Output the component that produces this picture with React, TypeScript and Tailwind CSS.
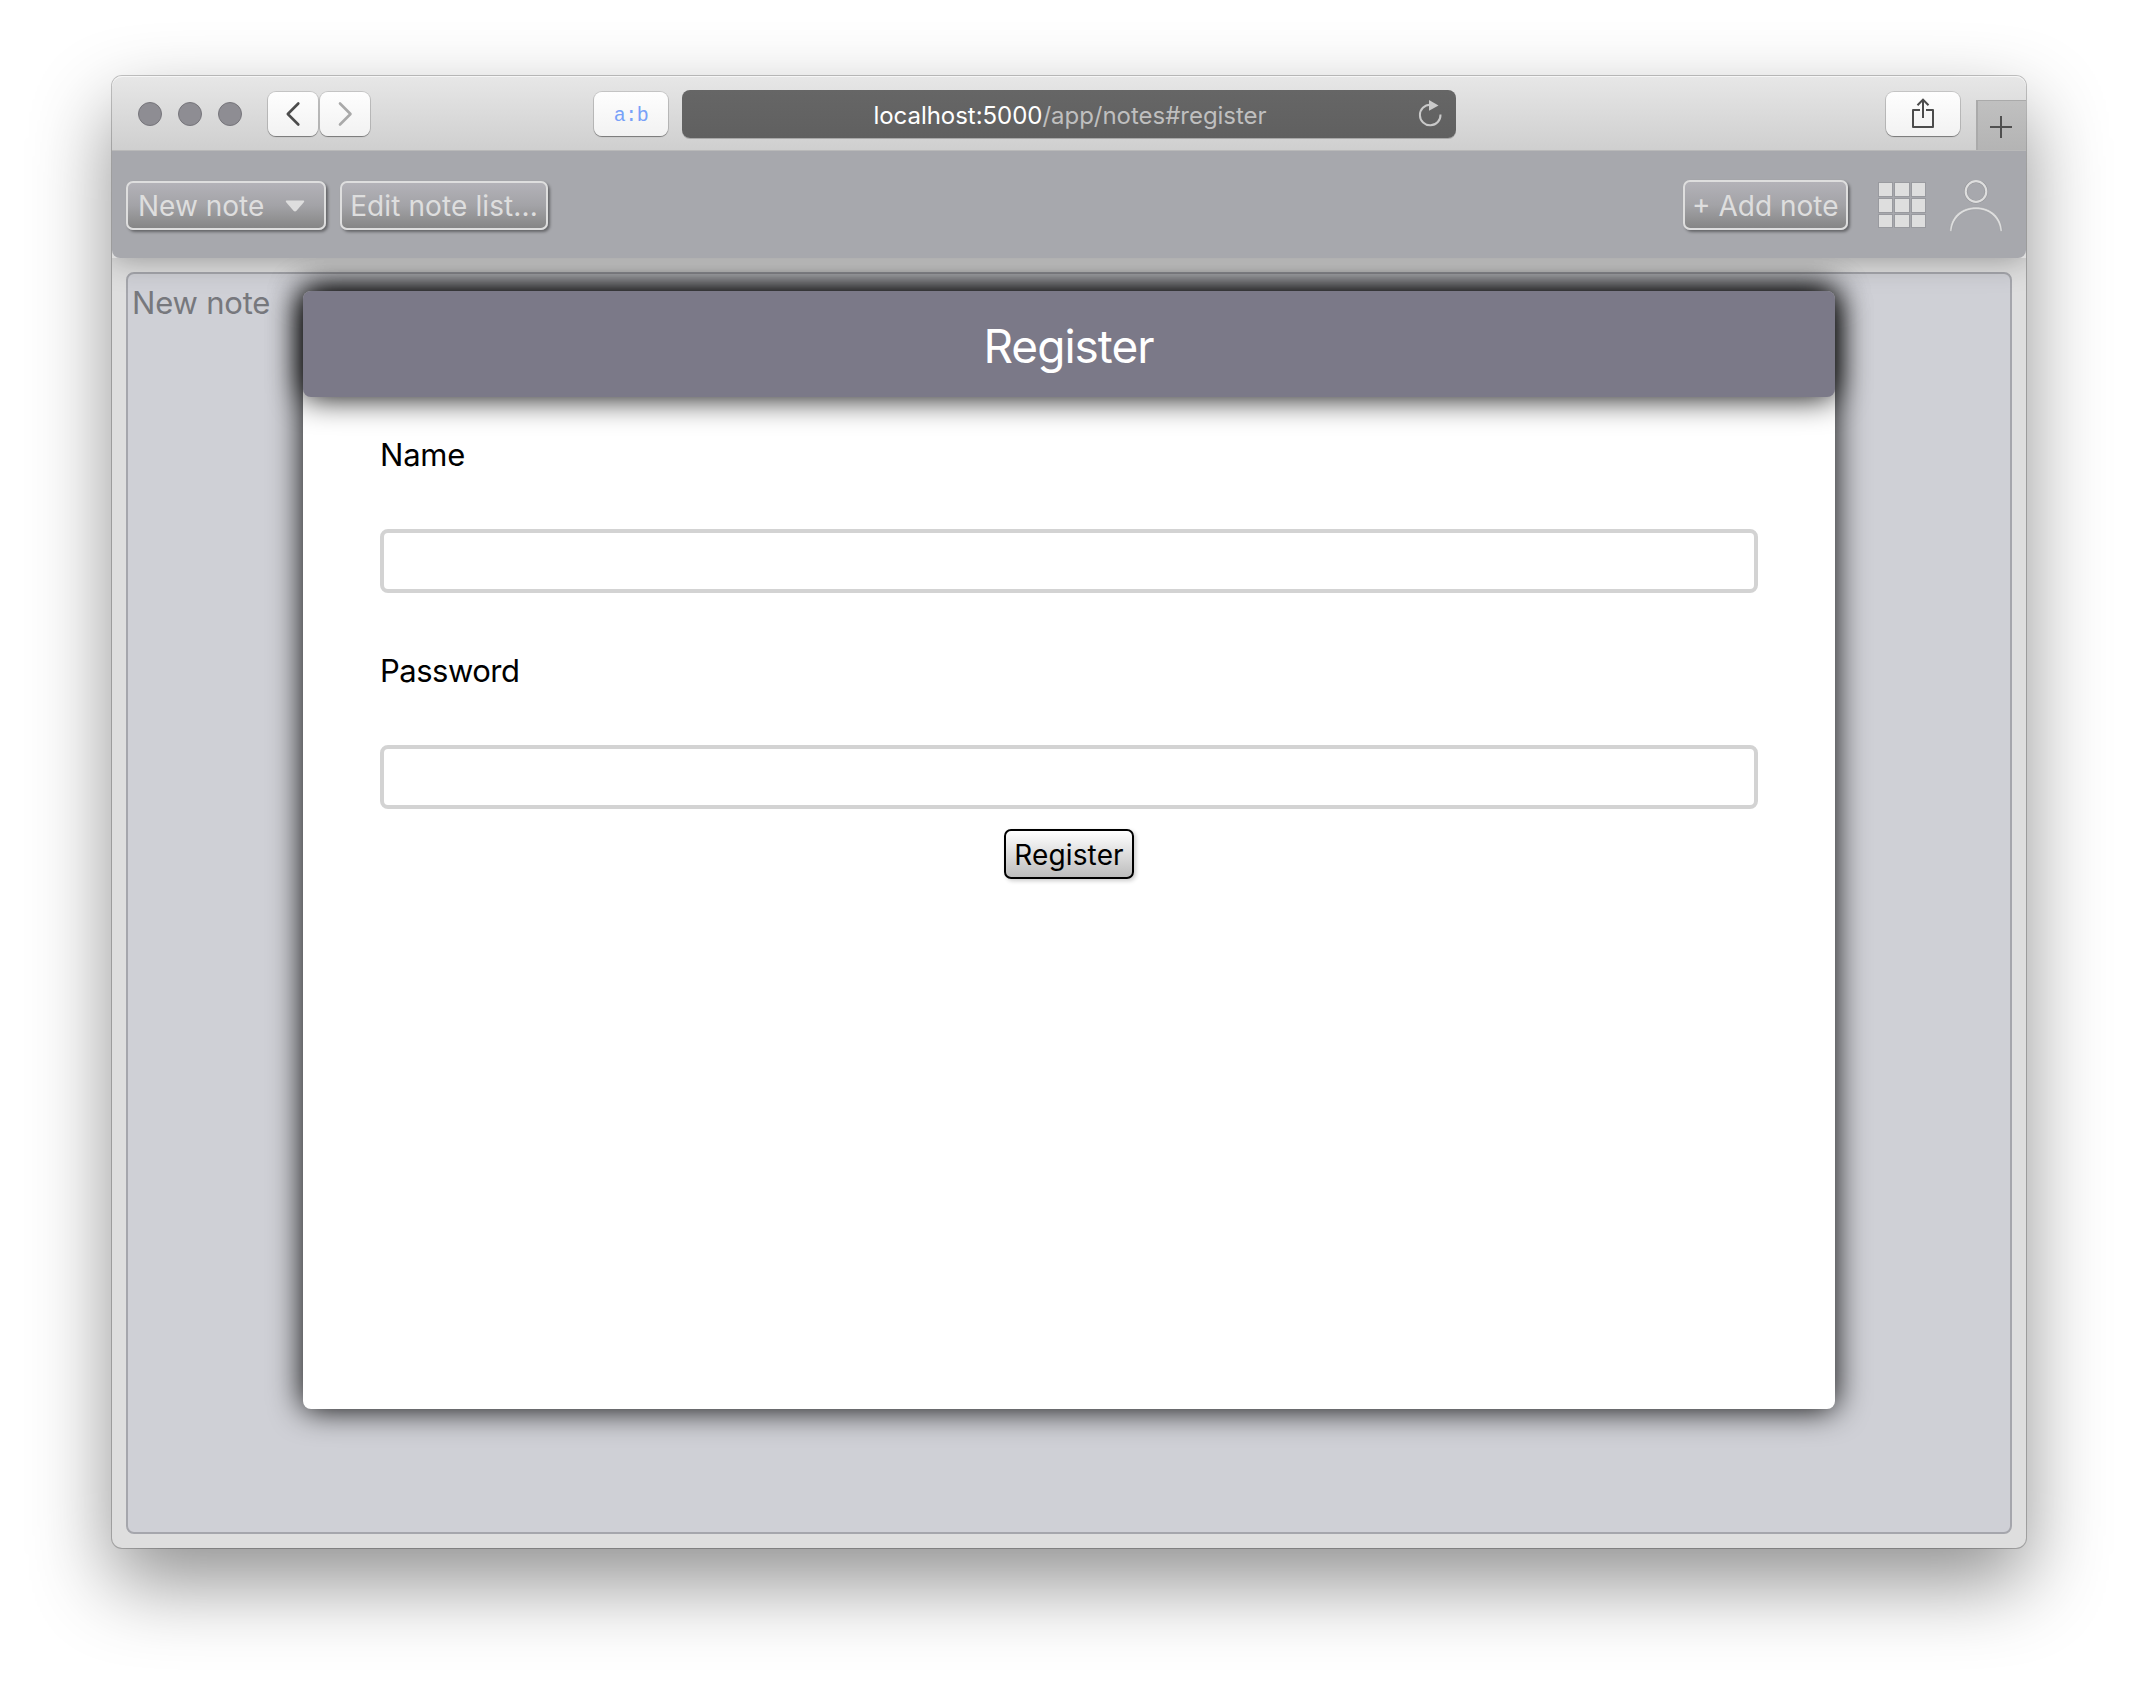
import type { ReactNode } from "react";

function ToolbarButton({ className, children }: { className: string; children: ReactNode }) {
  return (
    <button
      className={`flex h-11 items-center justify-center rounded-[8px] bg-gradient-to-b from-[#fefefe] to-[#f2f2f2] shadow-[0_0_0_1px_rgba(0,0,0,0.13),0_1px_1px_rgba(0,0,0,0.35)] ${className}`}
    >
      {children}
    </button>
  );
}

function AppButton({ className, children }: { className: string; children: ReactNode }) {
  return (
    <button
      className={`flex items-center rounded-[7px] border-2 border-[#dedede] bg-gradient-to-b from-[#b3b2b8] via-[#a3a3a7] to-[#868686] text-[28px] leading-none whitespace-nowrap text-[#dedede] shadow-[2px_2px_3px_rgba(0,0,0,0.4)] ${className}`}
    >
      {children}
    </button>
  );
}

function TitleBar() {
  return (
    <div className="flex h-[75px] shrink-0 items-start rounded-t-[10px] border-b border-[#b9b9b9] bg-gradient-to-b from-[#e7e7e7] to-[#cfcfcf] shadow-[inset_0_1px_0_#f6f6f6]">
      <div className="mt-[26px] ml-[26px] flex gap-4">
        {[0, 1, 2].map((i) => (
          <span key={i} className="size-6 rounded-full border border-[#76757b] bg-[#8e8d93]" />
        ))}
      </div>
      <div className="mt-4 ml-[26px] flex gap-[2px]">
        <ToolbarButton className="w-[50px]">
          <svg width="50" height="44" viewBox="0 0 50 44" fill="none" stroke="#4c4c4c" strokeWidth="2.6" strokeLinecap="round" strokeLinejoin="round">
            <path d="M30.3 11.5 19.8 22l10.5 10.5" />
          </svg>
        </ToolbarButton>
        <ToolbarButton className="w-[50px]">
          <svg width="50" height="44" viewBox="0 0 50 44" fill="none" stroke="#a9a9a9" strokeWidth="2.6" strokeLinecap="round" strokeLinejoin="round">
            <path d="M20 11.5 30.5 22 20 32.5" />
          </svg>
        </ToolbarButton>
      </div>
      <ToolbarButton className="mt-4 ml-56 w-[74px]">
        <span className="pt-1 font-['Liberation_Mono',monospace] text-[20px] leading-none tracking-[-0.5px] text-[#78a1f8]">a:b</span>
      </ToolbarButton>
      <div className="relative mt-[14px] ml-[14px] flex h-12 w-[774px] items-center justify-center rounded-[8px] bg-gradient-to-b from-[#666666] to-[#606060] pt-[3px] pl-[2px] text-[24px] leading-none tracking-[-0.03px] shadow-[0_1px_0_rgba(0,0,0,0.2)]">
        <span className="text-white">localhost:5000</span>
        <span className="text-[#bfbfbf]">/app/notes#register</span>
        <svg className="absolute top-0 right-0" width="52" height="48" viewBox="0 0 52 48" fill="none">
          <path d="M36.5 24.5A10.3 10.3 0 1 1 26.2 14.7" stroke="#c9c9c9" strokeWidth="2" />
          <path d="M25 10 34.5 15.4 25 20.8Z" fill="#c9c9c9" />
        </svg>
      </div>
      <ToolbarButton className="mt-4 ml-[430px] w-[74px]">
        <svg width="74" height="44" viewBox="0 0 74 44" fill="none" stroke="#4c4c4c" strokeWidth="2">
          <path d="M34 18H27V35H47V18H40" strokeLinejoin="round" />
          <path d="M37 26V7.8M31.5 13.3 37 7.6l5.5 5.7" />
        </svg>
      </ToolbarButton>
      <div className="mt-6 ml-auto flex h-[50px] w-[50px] items-center justify-center border-t border-l-2 border-[#aaaaaa] bg-gradient-to-b from-[#c0c0c0] to-[#b4b4b4] pt-[3px] pr-[2px]">
        <svg width="22" height="22" viewBox="0 0 22 22" stroke="#505050" strokeWidth="2">
          <path d="M11 0V22M0 11H22" />
        </svg>
      </div>
    </div>
  );
}

function AppHeader() {
  return (
    <header className="relative z-10 h-[107px] shrink-0 rounded-b-[8px] bg-[#a7a8ad]">
      <div className="flex items-start pt-[30px] pl-[14px]">
        <AppButton className="h-[49px] w-[200px] justify-between pr-[19px] pl-[10px]">
          New note
          <svg width="20" height="12" viewBox="0 0 20 12" fill="#dedede">
            <path d="M1.5 .5h17q1.3.2.5 1.5L11.5 10.8q-1.5 1.2-3 0L1 2Q.2.7 1.5.5Z" />
          </svg>
        </AppButton>
        <AppButton className="ml-[14px] h-[49px] w-52 justify-center tracking-[0.1px]">Edit note list...</AppButton>
        <AppButton className="-mt-px ml-auto h-[50px] w-[165px] justify-center pt-px">+ Add note</AppButton>
        <div className="mt-[2px] ml-[31px] grid grid-cols-3 gap-[3px]">
          {Array.from({ length: 9 }, (_, i) => (
            <span key={i} className="h-[12.8px] w-[13.4px] bg-[#dedede] shadow-[0_0_0_1px_rgba(0,0,0,0.08)]" />
          ))}
        </div>
        <svg className="-mt-px mr-[23px] ml-[24px]" width="54" height="54" viewBox="0 0 54 54" fill="none">
          <circle cx="27" cy="11.5" r="10.3" stroke="#929397" strokeWidth="3.2" />
          <circle cx="27" cy="11.5" r="10.3" stroke="#dedede" strokeWidth="2.2" />
          <path d="M.8 51.5C1 37 12 27 27 27S53 37 53.2 51.5H51.3C50 37.5 40 29.5 27 29.5S4 37.5 2.7 51.5Z" fill="#dedede" stroke="#999a9e" strokeWidth=".5" />
        </svg>
      </div>
    </header>
  );
}

function Field({ label, labelClass }: { label: string; labelClass: string }) {
  return (
    <label className="block">
      <span className={`block h-[94px] text-[31px] leading-[39px] ${labelClass}`}>{label}</span>
      <input className="block h-16 w-full rounded-[8px] border-4 border-[#d3d3d3] bg-white px-3 text-[28px] outline-none" />
    </label>
  );
}

function RegisterDialog() {
  return (
    <section className="h-[1118px] w-[1532px] rounded-[8px] bg-white text-black shadow-[0_0_32px_#000]">
      <h1 className="flex h-[106px] items-center justify-center rounded-[8px] bg-[#7b7988] pt-[3px] pr-px text-[46px] leading-none tracking-[-1px] text-white shadow-[0_0_32px_#000]">
        Register
      </h1>
      <form className="flex flex-col px-[77px] pt-[38px]">
        <Field label="Name" labelClass="tracking-[-0.2px]" />
        <div className="mt-[58px]">
          <Field label="Password" labelClass="tracking-[-0.5px]" />
        </div>
        <button
          type="button"
          className="mt-5 flex h-[50px] w-[130px] items-center justify-center self-center rounded-[7px] border-2 border-black bg-gradient-to-b from-white to-[#bdbdbd] pt-px text-[28px] leading-none tracking-[0.15px] shadow-[2px_2px_4px_rgba(0,0,0,0.2)]"
        >
          Register
        </button>
      </form>
    </section>
  );
}

export default function App() {
  return (
    <div className="h-[1696px] w-[2138px] overflow-hidden bg-white pt-[76px] pl-[112px] font-['Inter',sans-serif]">
      <div className="flex h-[1472px] w-[1914px] flex-col rounded-[10px] bg-[#dedede] shadow-[0_0_0_1px_rgba(0,0,0,0.22),0_34px_80px_rgba(0,0,0,0.44)]">
        <TitleBar />
        <AppHeader />
        <main className="relative flex flex-1 flex-col overflow-hidden rounded-b-[10px] p-[14px]">
          <div className="flex-1 rounded-[8px] border-2 border-[#a5a6ac] bg-[#cfd0d6] pt-[10px] pl-[4px] text-[31px] leading-[38px] tracking-[-0.2px] text-[#77787d]">
            New note
          </div>
          <div className="pointer-events-none absolute inset-x-0 top-0 h-20 overflow-hidden">
            <div className="-mt-10 h-10 rounded-b-[8px] shadow-[0_0_32px_rgba(0,0,0,0.36)]" />
          </div>
          <div className="absolute inset-0 flex items-start justify-center pt-[33px]">
            <RegisterDialog />
          </div>
        </main>
      </div>
    </div>
  );
}
